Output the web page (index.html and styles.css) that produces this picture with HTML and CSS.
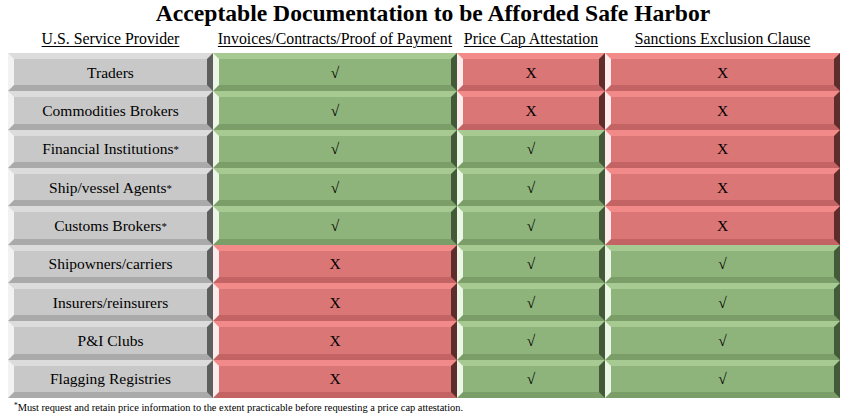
FILE: index.html
```html
<!DOCTYPE html>
<html>
<head>
<meta charset="utf-8">
<link rel="stylesheet" href="styles.css">
</head>
<body>
<h1 class="title">Acceptable Documentation to be Afforded Safe Harbor</h1>
<div class="grid">
  <div class="head"><span>U.S. Service Provider</span></div>
  <div class="head"><span>Invoices/Contracts/Proof of Payment</span></div>
  <div class="head"><span>Price Cap Attestation</span></div>
  <div class="head"><span>Sanctions Exclusion Clause</span></div>

  <div class="cell gray">Traders</div>
  <div class="cell green">√</div>
  <div class="cell red">X</div>
  <div class="cell red">X</div>

  <div class="cell gray">Commodities Brokers</div>
  <div class="cell green">√</div>
  <div class="cell red">X</div>
  <div class="cell red">X</div>

  <div class="cell gray">Financial Institutions<sup class="ast">*</sup></div>
  <div class="cell green">√</div>
  <div class="cell green">√</div>
  <div class="cell red">X</div>

  <div class="cell gray">Ship/vessel Agents<sup class="ast">*</sup></div>
  <div class="cell green">√</div>
  <div class="cell green">√</div>
  <div class="cell red">X</div>

  <div class="cell gray">Customs Brokers<sup class="ast">*</sup></div>
  <div class="cell green">√</div>
  <div class="cell green">√</div>
  <div class="cell red">X</div>

  <div class="cell gray">Shipowners/carriers</div>
  <div class="cell red">X</div>
  <div class="cell green">√</div>
  <div class="cell green">√</div>

  <div class="cell gray">Insurers/reinsurers</div>
  <div class="cell red">X</div>
  <div class="cell green">√</div>
  <div class="cell green">√</div>

  <div class="cell gray">P&amp;I Clubs</div>
  <div class="cell red">X</div>
  <div class="cell green">√</div>
  <div class="cell green">√</div>

  <div class="cell gray">Flagging Registries</div>
  <div class="cell red">X</div>
  <div class="cell green">√</div>
  <div class="cell green">√</div>
</div>
<p class="note"><sup class="ast">*</sup>Must request and retain price information to the extent practicable before requesting a price cap attestation.</p>
</body>
</html>
```
FILE: styles.css
```css
html, body {
  margin: 0;
  padding: 0;
  background: #ffffff;
}
body {
  font-family: "Liberation Serif", "Times New Roman", serif;
  color: #000;
  width: 850px;
  height: 419px;
  overflow: hidden;
}
.title {
  margin: 0;
  padding-left: 16px;
  height: 26px;
  line-height: 26px;
  font-size: 23.6px;
  font-weight: bold;
  text-align: center;
}
.grid {
  margin-left: 8px;
  width: 832px;
  display: grid;
  grid-template-columns: 205px 244px 148px 235px;
  grid-template-rows: 27px repeat(9, 38.33px);
}
.head {
  display: flex;
  justify-content: center;
  align-items: center;
  font-size: 15.8px;
  padding-bottom: 1px;
}
.head span {
  text-decoration: underline;
  text-underline-offset: 2px;
  text-decoration-thickness: 1px;
}
.cell {
  box-sizing: border-box;
  border-style: solid;
  border-width: 6px;
  display: flex;
  justify-content: center;
  align-items: center;
  font-size: 15.5px;
  padding-top: 1px;
}
.gray {
  background: #c8c8c8;
  border-top-color: #dcdcdc;
  border-left-color: #f2f2f2;
  border-right-color: #5e5e5e;
  border-bottom-color: #aaaaaa;
}
.green {
  background: #8fb47b;
  border-top-color: #a6ca91;
  border-left-color: #ecf6e6;
  border-right-color: #425a38;
  border-bottom-color: #7b9e68;
}
.red {
  background: #db7676;
  border-top-color: #f38a8a;
  border-left-color: #fdeaea;
  border-right-color: #5f2c2c;
  border-bottom-color: #c36363;
}
.ast {
  font-size: 0.7em;
  vertical-align: 0.35em;
  line-height: 0;
}
.note {
  margin: 4px 0 0 14px;
  font-size: 10.4px;
  line-height: 12px;
}
```
